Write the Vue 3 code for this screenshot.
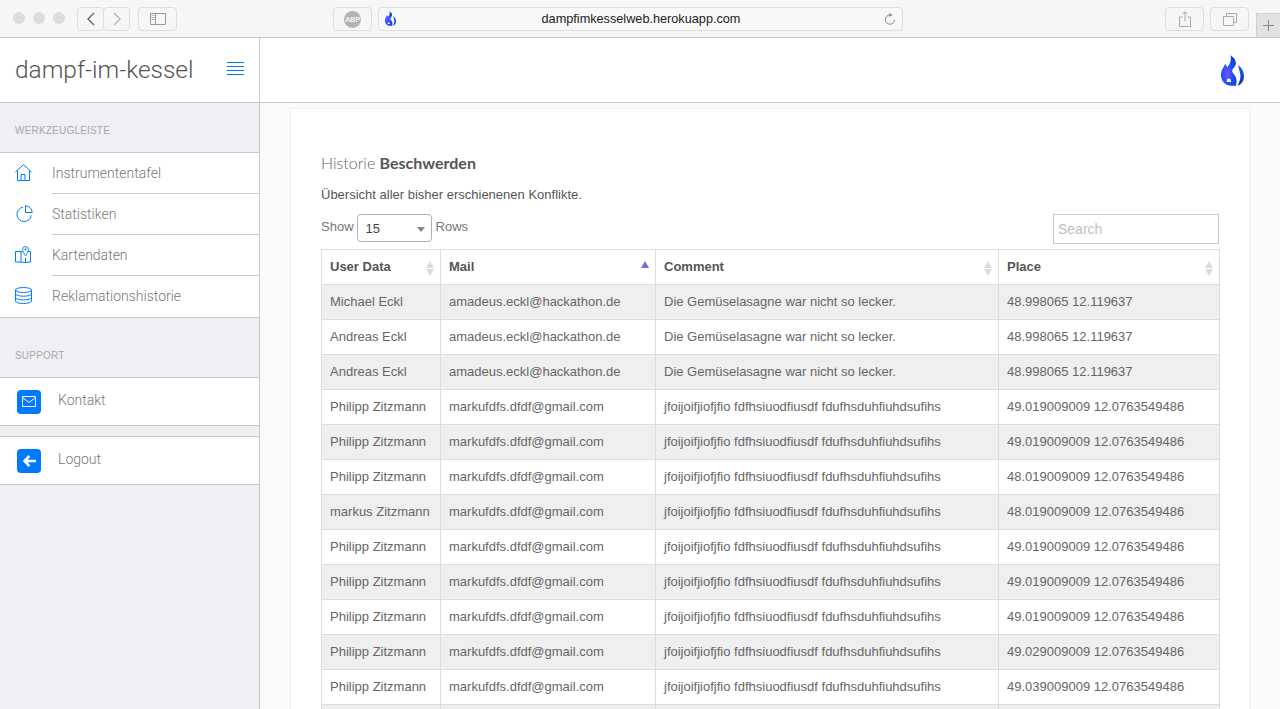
<script setup>
const nav = [
  { label: 'Instrumententafel', icon: 'home' },
  { label: 'Statistiken', icon: 'pie' },
  { label: 'Kartendaten', icon: 'map' },
  { label: 'Reklamationshistorie', icon: 'db' }
]
const mail1 = 'amadeus.eckl@hackathon.de'
const mail2 = 'markufdfs.dfdf@gmail.com'
const c1 = 'Die Gemüselasagne war nicht so lecker.'
const c2 = 'jfoijoifjiofjfio fdfhsiuodfiusdf fdufhsduhfiuhdsufihs'
const p1 = '48.998065 12.119637'
const rows = [
  ['Michael Eckl', mail1, c1, p1],
  ['Andreas Eckl', mail1, c1, p1],
  ['Andreas Eckl', mail1, c1, p1],
  ['Philipp Zitzmann', mail2, c2, '49.019009009 12.0763549486'],
  ['Philipp Zitzmann', mail2, c2, '49.019009009 12.0763549486'],
  ['Philipp Zitzmann', mail2, c2, '48.019009009 12.0763549486'],
  ['markus Zitzmann', mail2, c2, '48.019009009 12.0763549486'],
  ['Philipp Zitzmann', mail2, c2, '49.019009009 12.0763549486'],
  ['Philipp Zitzmann', mail2, c2, '49.019009009 12.0763549486'],
  ['Philipp Zitzmann', mail2, c2, '49.019009009 12.0763549486'],
  ['Philipp Zitzmann', mail2, c2, '49.029009009 12.0763549486'],
  ['Philipp Zitzmann', mail2, c2, '49.039009009 12.0763549486'],
  ['', '', '', '']
]
const cols = [
  { label: 'User Data', width: 119 },
  { label: 'Mail', width: 215, active: true },
  { label: 'Comment', width: 343 },
  { label: 'Place', width: 221 }
]
</script>

<template>
  <div class="page">
    <svg class="defs" width="0" height="0">
      <defs>
        <radialGradient id="fg" cx=".4" cy=".6" r=".75">
          <stop offset="0" stop-color="#7a50ff"/>
          <stop offset=".45" stop-color="#1f52ff"/>
          <stop offset="1" stop-color="#0a36c8"/>
        </radialGradient>
        <linearGradient id="fr" x1="0" y1="0" x2="0" y2="1">
          <stop offset="0" stop-color="#1f62ff"/>
          <stop offset="1" stop-color="#0a2f9c"/>
        </linearGradient>
        <g id="flame">
          <path fill="url(#fg)" d="M10 0C16 4 17 9 13.500 13 11.500 15 11 16.500 12.500 18.500 15.500 21.500 17.500 26 15.500 32H11C4.500 32 0 27 0 21 0 15 3 13 4.500 9 5.500 11 6 12 7 12 9.500 9 11 5 10 0z"/>
          <path fill="url(#fr)" d="M18 10.500C21.500 13 24 17 24 22 24 27.500 20.500 31 17 32 19.500 28 21 23 20 19 19.500 16 18 13.500 18 10.500z"/>
          <path fill="#fff" d="M6.500 24.500h3.200l.8 3.500H6z"/>
        </g>
      </defs>
    </svg>
    <header class="chrome">
      <div class="lights"><i></i><i></i><i></i></div>
      <div class="navpair">
        <button class="cbtn back">
          <svg width="10" height="14" viewBox="0 0 10 14"><path d="M8 1 2 7l6 6" fill="none" stroke="#666" stroke-width="1.400"/></svg>
        </button>
        <button class="cbtn fwd">
          <svg width="10" height="14" viewBox="0 0 10 14"><path d="M2 1l6 6-6 6" fill="none" stroke="#b5b5b5" stroke-width="1.400"/></svg>
        </button>
      </div>
      <button class="cbtn side">
        <svg width="16" height="12" viewBox="0 0 16 12"><path d="M.5.5h15v11H.5zM5.500.5v11" fill="none" stroke="#9a9a9a"/><path d="M1.500 2.500h3M1.500 4.500h3M1.500 6.500h3" stroke="#b5b5b5"/></svg>
      </button>
      <button class="cbtn abp"><span class="abpmark">ABP</span></button>
      <div class="url">
        <svg class="favicon" width="11" height="15" viewBox="0 0 24 32"><use href="#flame" /></svg>
        <span class="urltext">dampfimkesselweb.herokuapp.com</span>
        <svg class="reload" width="12" height="14" viewBox="0 0 12 14"><path d="M6 3a4.600 4.600 0 1 0 4.600 4.600" fill="none" stroke="#888" stroke-width="1"/><path d="M5.500.8 8.400 3 5.500 5z" fill="#888"/></svg>
      </div>
      <button class="cbtn tool share">
        <svg width="12" height="16" viewBox="0 0 12 16"><path d="M3.500 6H.5v9.500h11V6h-3M6 10.500V1M3.800 3 6 .8 8.200 3" fill="none" stroke="#aaa"/></svg>
      </button>
      <button class="cbtn tool tabs">
        <svg width="14" height="13" viewBox="0 0 14 13"><path d="M3.500 3V.5h10v9H10.500M.5 3.500h10v9H.5z" fill="none" stroke="#aaa"/></svg>
      </button>
      <div class="plus">
        <svg width="11" height="11" viewBox="0 0 11 11"><path d="M5.500 0v11M0 5.500h11" stroke="#8a8a8a"/></svg>
      </div>
    </header>

    <div class="app">
      <aside class="sidebar">
        <div class="brand">
          <span class="brandname">dampf-im-kessel</span>
          <svg class="burger" width="17" height="13" viewBox="0 0 17 13"><path d="M0 .5h17M0 4.500h17M0 8.500h17M0 12.500h17" stroke="#007aff"/></svg>
        </div>
        <div class="seclabel first">WERKZEUGLEISTE</div>
        <ul class="menu">
          <li v-for="item in nav" :key="item.label" class="menuitem">
            <span class="micon">
              <svg v-if="item.icon === 'home'" width="17" height="17" viewBox="0 0 17 17"><path d="M.4 8 8.500.7 16.600 8M2.500 6.500v10h12v-10M6 16.500v-6h4v6" fill="none" stroke="#007aff"/></svg>
              <svg v-else-if="item.icon === 'pie'" class="pie" width="17" height="17" viewBox="0 0 17 17"><path d="M7 2.200A7.200 7.200 0 1 0 15.300 10.200" fill="none" stroke="#007aff"/><path d="M9.500.8a6.800 6.800 0 0 1 6.700 6.700H9.500z" fill="none" stroke="#007aff"/></svg>
              <svg v-else-if="item.icon === 'map'" width="17" height="17" viewBox="0 0 17 17"><path d="M.5 5.500h5.500v10.500H.5zM6 16l4.500.6 5-.6V5.500h-2.500M6 5.500h1.500M10.500 12v4.500" fill="none" stroke="#007aff"/><path d="M10.500.6a2.900 2.900 0 0 1 2.900 2.900c0 2.200-2.900 6.500-2.900 6.500S7.600 5.700 7.600 3.500A2.900 2.900 0 0 1 10.500.6z" fill="#fff" stroke="#007aff"/><circle cx="10.500" cy="3.500" r="1" fill="#007aff"/></svg>
              <svg v-else width="17" height="17" viewBox="0 0 17 17"><ellipse cx="8.500" cy="3" rx="8" ry="2.500" fill="none" stroke="#007aff"/><path d="M.5 3v11c0 1.400 3.600 2.500 8 2.500s8-1.100 8-2.500V3M.5 6.700c0 1.400 3.600 2.500 8 2.500s8-1.100 8-2.500M.5 10.400c0 1.400 3.600 2.500 8 2.500s8-1.100 8-2.500" fill="none" stroke="#007aff"/></svg>
            </span>
            <span class="mlabel">{{ item.label }}</span>
          </li>
        </ul>
        <div class="seclabel second">SUPPORT</div>
        <div class="action">
          <span class="tile">
            <svg width="14" height="11" viewBox="0 0 14 11"><path d="M.5.500h13v10H.5zM.5 1.500 7 6.500l6.500-5" fill="none" stroke="#fff"/></svg>
          </span>
          <span class="alabel">Kontakt</span>
        </div>
        <div class="action logout">
          <span class="tile">
            <svg width="13" height="12" viewBox="0 0 13 12"><path d="M6.300 1 1.500 6l4.800 5M2 6h11" fill="none" stroke="#fff" stroke-width="2.600"/></svg>
          </span>
          <span class="alabel">Logout</span>
        </div>
      </aside>

      <div class="main">
        <div class="topbar">
          <svg class="logo" width="23" height="31" viewBox="0 0 24 32"><use href="#flame"/></svg>
        </div>
        <div class="content">
          <section class="card">
            <h2 class="title">Historie <b>Beschwerden</b></h2>
            <p class="sub">Übersicht aller bisher erschienenen Konflikte.</p>
            <div class="controls">
              <div class="show">
                <span>Show</span>
                <span class="select">15<i class="caret"></i></span>
                <span>Rows</span>
              </div>
              <div class="search">Search</div>
            </div>
            <table class="grid">
              <colgroup><col v-for="c in cols" :key="c.label" :style="{ width: c.width + 'px' }" /></colgroup>
              <thead>
                <tr>
                  <th v-for="c in cols" :key="c.label">
                    {{ c.label }}
                    <span class="sort" :class="{ active: c.active }"><i class="up"></i><i class="down"></i></span>
                  </th>
                </tr>
              </thead>
              <tbody>
                <tr v-for="(r, i) in rows" :key="i">
                  <td v-for="(v, j) in r" :key="j">{{ v }}</td>
                </tr>
              </tbody>
            </table>
          </section>
        </div>
      </div>
    </div>
  </div>
</template>

<style>
html, body { margin: 0; height: 100%; overflow: hidden; background: #fff; }
</style>

<style scoped>
.page { height: 709px; overflow: hidden; font-family: "Liberation Sans", Arial, sans-serif; display: flex; flex-direction: column; }
.defs { position: absolute; }
.chrome { height: 37px; flex: none; box-sizing: content-box; border-bottom: 1px solid #c9c9c9; background: #f6f6f6; display: flex; align-items: flex-start; position: relative; }
.lights { display: flex; gap: 8px; margin: 12px 0 0 13px; }
.lights i { width: 12px; height: 12px; border-radius: 50%; background: #dcdcdc; }
.cbtn { box-sizing: border-box; height: 24px; margin-top: 7px; padding: 0; background: #f6f6f6; border: 1px solid #dedede; border-radius: 4px; display: flex; align-items: center; justify-content: center; }
.navpair { display: flex; margin-left: 12px; }
.back, .fwd { width: 27px; }
.fwd { margin-left: -1px; }
.side { width: 39px; margin-left: 8px; }
.abp { width: 39px; margin-left: 156px; }
.abpmark { width: 17px; height: 17px; border-radius: 50%; background: #b3b3b3; color: #f4f4f4; font-size: 7.500px; font-weight: 700; line-height: 17px; text-align: center; letter-spacing: -.2px; }
.url { box-sizing: border-box; width: 525px; height: 24px; margin: 7px 0 0 6px; background: #f8f8f8; border: 1px solid #dedede; border-radius: 4px; position: relative; display: flex; align-items: center; justify-content: center; }
.favicon { position: absolute; left: 6px; top: 3px; }
.urltext { font-size: 12.700px; color: #222; margin-left: 1px; }
.reload { position: absolute; right: 6px; top: 4px; }
.tool { width: 39px; }
.share { margin-left: 262px; }
.tabs { margin-left: 6px; }
.plus { position: absolute; right: 0; top: 13px; width: 24px; height: 24px; background: #e2e2e2; border-left: 1px solid #cfcfcf; border-top: 1px solid #d2d2d2; box-sizing: border-box; display: flex; align-items: center; justify-content: center; }

.app { flex: 1; display: flex; min-height: 0; }
.sidebar { box-sizing: content-box; width: 259px; flex: none; background: #efeff4; border-right: 1px solid #c8c7cc; }
.brand { height: 64px; background: #fff; border-bottom: 1px solid #c8c7cc; display: flex; align-items: center; justify-content: space-between; padding: 0 15px; }
.brandname { font-family: Roboto, sans-serif; font-size: 24.450px; color: #555; font-weight: 300; padding-bottom: 2px; }
.burger { margin-bottom: 4px; }
.seclabel { font-size: 10px; color: #a8a8a8; padding-left: 15px; letter-spacing: .2px; box-sizing: border-box; }
.first { height: 49px; line-height: 56px; }
.second { height: 59px; line-height: 76px; }
.menu { list-style: none; margin: 0; padding: 0; background: #fff; border-top: 1px solid #c8c7cc; border-bottom: 1px solid #c8c7cc; }
.menuitem { height: 41px; display: flex; align-items: center; padding-left: 15px; position: relative; box-sizing: border-box; }
.menuitem:not(:last-child)::after { content: ""; position: absolute; left: 52px; right: 0; bottom: 0; height: 1px; background: #c8c7cc; }
.micon { width: 18px; height: 17px; display: flex; margin-bottom: 2px; }
.pie { margin-left: 1px; }
.mlabel { margin-left: 19px; font-family: Roboto, sans-serif; font-weight: 300; font-size: 14px; color: #777; padding-bottom: 1px; }
.action { height: 47px; box-sizing: content-box; background: #fff; border-top: 1px solid #c8c7cc; border-bottom: 1px solid #c8c7cc; display: flex; align-items: center; padding-left: 17px; }
.logout { margin-top: 10px; }
.tile { width: 24px; height: 24px; background: #007aff; border-radius: 4px; display: flex; align-items: center; justify-content: center; }
.alabel { margin-left: 17px; font-family: Roboto, sans-serif; font-weight: 300; font-size: 14px; color: #777; padding-bottom: 3px; }

.main { flex: 1; min-width: 0; display: flex; flex-direction: column; background: #fafafa; }
.topbar { height: 64px; flex: none; background: #fff; border-bottom: 1px solid #c8c7cc; display: flex; align-items: center; justify-content: flex-end; padding-right: 36px; }
.logo { margin-top: 0; }
.content { flex: 1; padding: 5px 30px 0; overflow: hidden; }
.card { background: #fff; border: 1px solid #efefef; border-bottom: 0; padding: 44px 30px 0; height: 900px; box-sizing: border-box; }
.title { margin: 0; font-family: Lato, sans-serif; font-size: 16px; line-height: 20px; font-weight: 300; color: #666; }
.title b { font-weight: 700; color: #555; }
.sub { margin: 13px 0 0; font-size: 13px; line-height: 18px; color: #555; }
.controls { display: flex; justify-content: space-between; margin-top: 10px; height: 35px; }
.show { display: flex; align-items: flex-start; gap: 3px; font-size: 13px; color: #777; line-height: 25px; }
.select { box-sizing: border-box; width: 75px; height: 28px; margin: 0 1px 0 0; border: 1px solid #b0b0b0; border-radius: 4px; padding-left: 8px; font-size: 13px; line-height: 27px; color: #444; position: relative; }
.caret { position: absolute; right: 6px; top: 12px; border-left: 4px solid transparent; border-right: 4px solid transparent; border-top: 5px solid #888; }
.search { box-sizing: border-box; width: 166px; height: 30px; border: 1px solid #c9c9c9; padding-left: 4px; font-size: 14px; line-height: 28px; color: #c0c0c0; }
.grid { border-collapse: collapse; table-layout: fixed; width: 898px; font-size: 13px; color: #666; }
.grid th, .grid td { border: 1px solid #dddddd; height: 35px; box-sizing: border-box; padding: 0 8px; white-space: nowrap; overflow: hidden; text-align: left; }
.grid th { font-weight: 700; color: #555; position: relative; background: #fff; padding-bottom: 2px; }
.grid td { padding-bottom: 2px; }
.grid tbody tr:nth-child(odd) td { background: #efeff0; }
.sort { position: absolute; right: 6px; top: 11px; display: flex; flex-direction: column; gap: 1px; }
.up { border-left: 4.500px solid transparent; border-right: 4.500px solid transparent; border-bottom: 7px solid #dcdcdc; }
.down { border-left: 4.500px solid transparent; border-right: 4.500px solid transparent; border-top: 7px solid #dcdcdc; }
.active .up { border-bottom-color: #6f6fdc; }
.active .down { border-top-color: transparent; }
</style>
